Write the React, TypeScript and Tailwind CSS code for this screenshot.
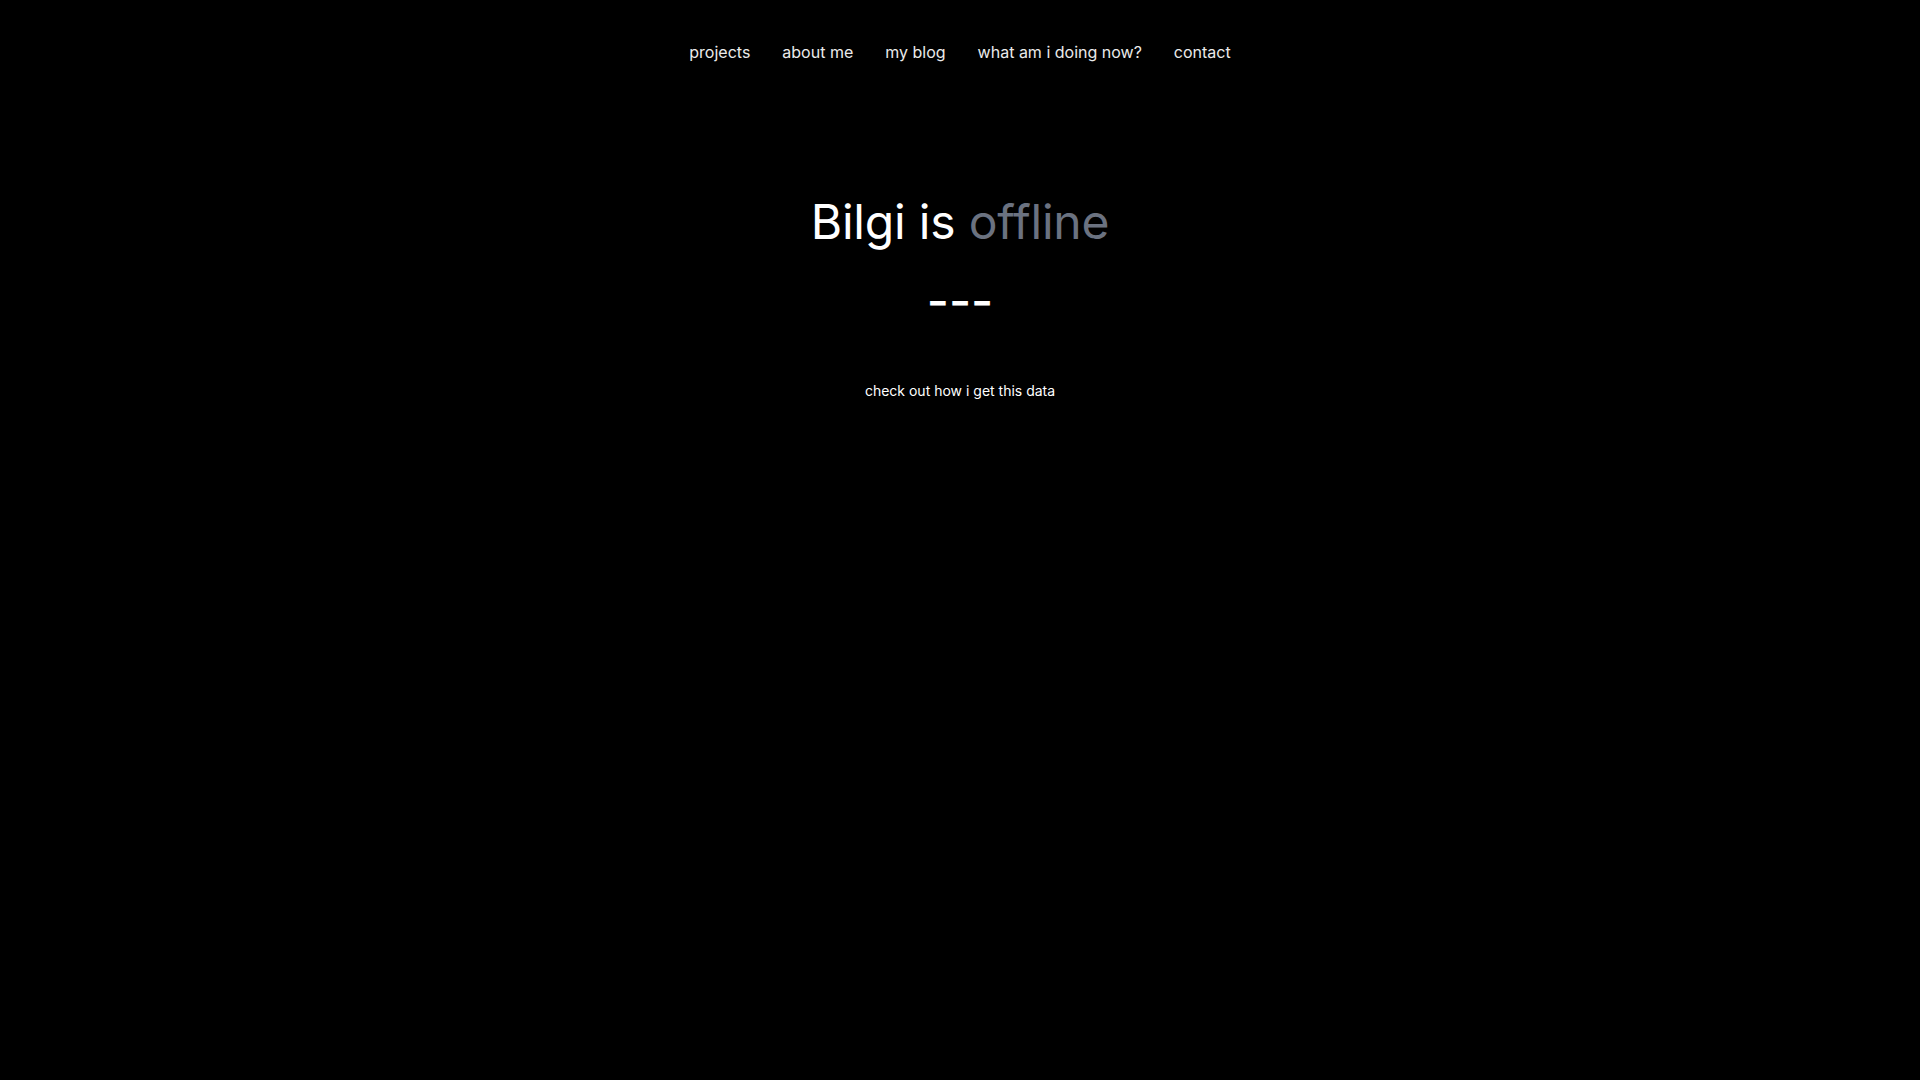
import * as React from 'react'

const links = ['projects', 'about me', 'my blog', 'what am i doing now?', 'contact']

export default function App() {
    return (
        <div className="min-h-screen bg-black text-white" style={{ fontFamily: 'Inter, "Noto Sans", sans-serif' }}>
            <nav className="flex justify-center pt-[40px]">
                {links.map((link) => (
                    <a key={link} href="#" className="px-4 text-base leading-6 text-[#ebebeb]">
                        {link}
                    </a>
                ))}
            </nav>
            <main className="flex flex-col items-center pt-[134px]">
                <h1 className="text-5xl leading-none tracking-[-0.2px]">
                    Bilgi is <span className="text-[#6b7280]">offline</span>
                </h1>
                <div className="mt-[31px] text-5xl leading-none font-medium">---</div>
                <a href="#" className="mt-[56px] text-sm leading-5 text-white">
                    check out how i get this data
                </a>
            </main>
        </div>
    )
}
